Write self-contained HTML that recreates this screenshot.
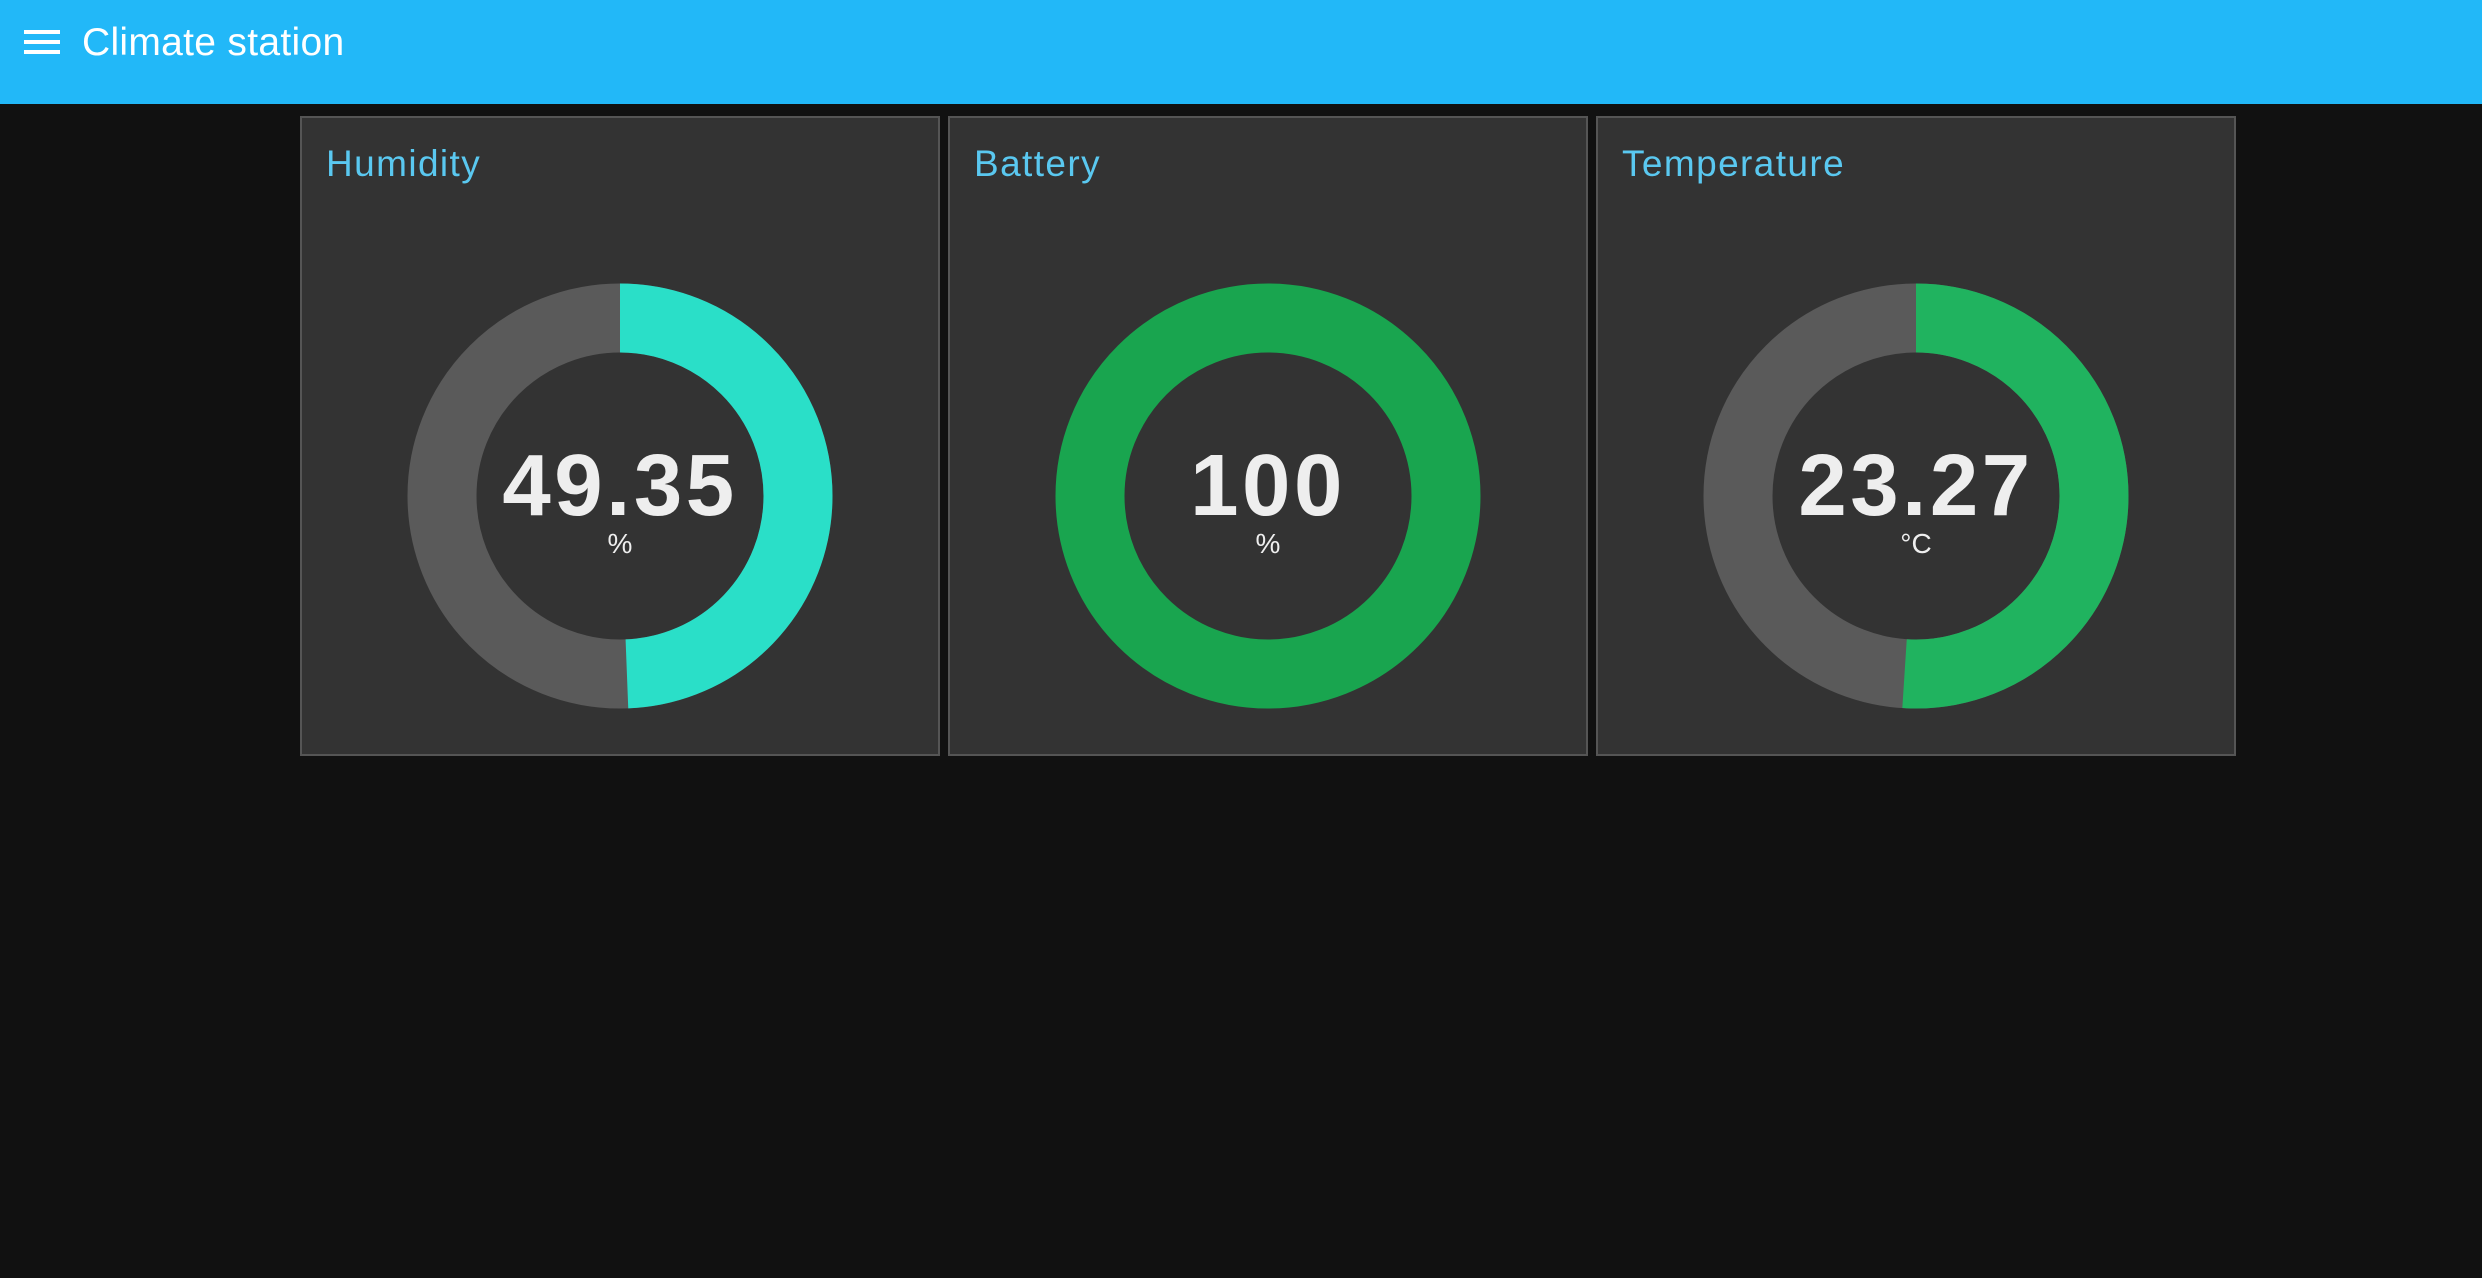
<!DOCTYPE html>
<html><head><meta charset="utf-8"><style>
html,body{margin:0;padding:0;background:#111;width:2482px;height:1278px;overflow:hidden;font-family:"Liberation Sans",sans-serif}
.hdr{position:absolute;left:0;top:0;width:2482px;height:104px;background:#22b8f8}
.hb{position:absolute;left:24px;width:36px;height:4px;background:#fff}
.title{position:absolute;left:82px;top:19px;font-size:39px;color:#fff;line-height:48px;letter-spacing:0.3px}
.card{position:absolute;top:116px;width:636px;height:636px;border:2px solid #555;background:#333}
.ct{position:absolute;left:24px;top:22px;font-size:37px;color:#5ac8f0;line-height:48px;letter-spacing:1.4px}
svg{position:absolute;left:0;top:0}
</style></head><body>
<div class="hdr">
<div class="hb" style="top:30px"></div><div class="hb" style="top:40px"></div><div class="hb" style="top:50px"></div>
<div class="title">Climate station</div>
</div>

<div class="card" style="left:300px"><div class="ct">Humidity</div>
<svg width="636" height="636"><circle cx="318" cy="378" r="178" fill="none" stroke="#5a5a5a" stroke-width="69"/>
<circle cx="318" cy="378" r="178" fill="none" stroke="#2adfc8" stroke-width="69" stroke-dasharray="552 2000" transform="rotate(-90 318 378)"/>
<text x="318" y="397" text-anchor="middle" font-family="Liberation Sans" font-weight="bold" font-size="87" letter-spacing="3.5" fill="#eee">49.35</text>
<text x="318" y="435" text-anchor="middle" font-family="Liberation Sans" font-size="28" fill="#eee">%</text></svg></div>

<div class="card" style="left:948px"><div class="ct">Battery</div>
<svg width="636" height="636"><circle cx="318" cy="378" r="178" fill="none" stroke="#19a54f" stroke-width="69"/>
<text x="318" y="397" text-anchor="middle" font-family="Liberation Sans" font-weight="bold" font-size="87" letter-spacing="3.5" fill="#eee">100</text>
<text x="318" y="435" text-anchor="middle" font-family="Liberation Sans" font-size="28" fill="#eee">%</text></svg></div>

<div class="card" style="left:1596px"><div class="ct">Temperature</div>
<svg width="636" height="636"><circle cx="318" cy="378" r="178" fill="none" stroke="#5a5a5a" stroke-width="69"/>
<circle cx="318" cy="378" r="178" fill="none" stroke="#20b35f" stroke-width="69" stroke-dasharray="570.5 2000" transform="rotate(-90 318 378)"/>
<text x="318" y="397" text-anchor="middle" font-family="Liberation Sans" font-weight="bold" font-size="87" letter-spacing="3.5" fill="#eee">23.27</text>
<text x="318" y="435" text-anchor="middle" font-family="Liberation Sans" font-size="28" fill="#eee">°C</text></svg></div>
</body></html>
